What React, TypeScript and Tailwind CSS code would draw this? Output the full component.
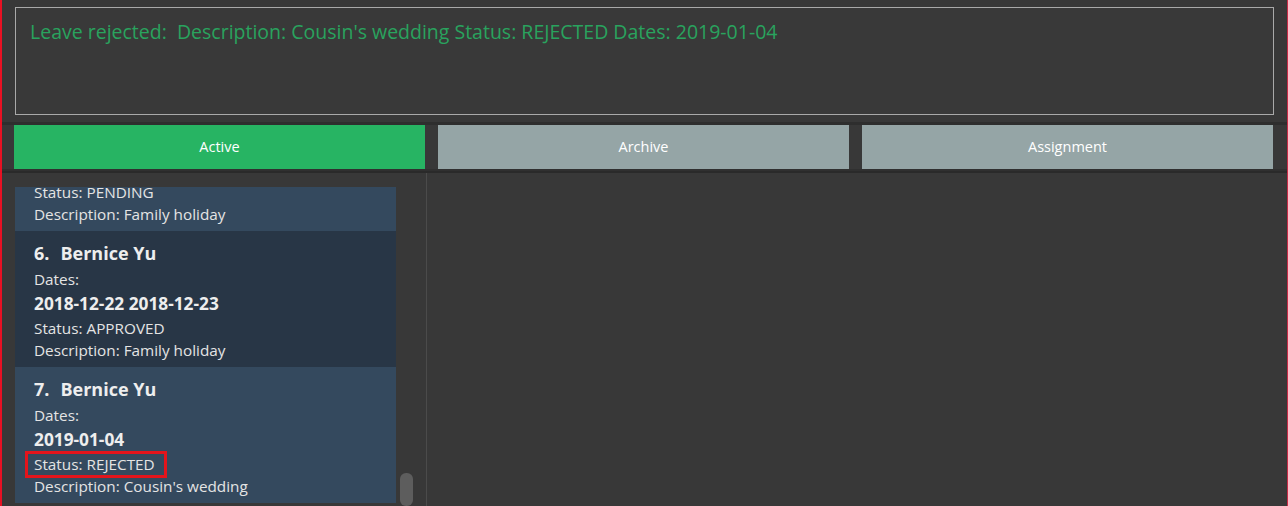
import React from 'react';

type Leave = {
    index: number;
    name: string;
    dates: string;
    status: string;
    description: string;
    highlight?: boolean;
};

const leaves: Leave[] = [
    { index: 5, name: 'Bernice Yu', dates: '2018-12-20 2018-12-21', status: 'PENDING', description: 'Family holiday' },
    { index: 6, name: 'Bernice Yu', dates: '2018-12-22 2018-12-23', status: 'APPROVED', description: 'Family holiday' },
    { index: 7, name: 'Bernice Yu', dates: '2019-01-04', status: 'REJECTED', description: "Cousin's wedding", highlight: true },
];

const font = { fontFamily: '"Open Sans", "Noto Sans", sans-serif' };

const LeaveCard = ({ index, name, dates, status, description, highlight }: Leave) => {
    return (
        <div
            className={`relative h-[136px] w-[381px] shrink-0 pl-[19px] pt-[9px] text-[#e4e4e4] ${
                index % 2 === 0 ? 'bg-[#283646]' : 'bg-[#34495e]'
            }`}
        >
            <div className="flex h-[26px] items-center text-[18px] font-bold text-[#eeeeee]">
                <span>{index}.</span>
                <span className="ml-[11px]">{name}</span>
            </div>
            <div className="flex h-[26px] items-center text-[15.3px]">Dates:</div>
            <div className="flex h-[24px] items-center text-[17.3px] font-bold text-[#eeeeee]">{dates}</div>
            <div className="flex h-[24px] items-center text-[15.3px]">Status: {status}</div>
            <div className="flex h-[20px] items-center text-[15.3px]">Description: {description}</div>
            {highlight && (
                <div className="absolute left-[10px] top-[84px] h-[27px] w-[142px] border-[3px] border-[#e3141c]" />
            )}
        </div>
    );
};

const Tab = ({ label, active }: { label: string; active?: boolean }) => (
    <div
        className={`flex flex-1 items-center justify-center text-[14.5px] text-white ${
            active ? 'bg-[#27b463]' : 'bg-[#95a5a6]'
        }`}
    >
        {label}
    </div>
);

export default function App() {
    return (
        <div
            className="flex h-[506px] w-[1288px] flex-col overflow-hidden border-l-2 border-r border-l-[#e81123] border-r-[#c72c48] bg-[#383838]"
            style={font}
        >
            {/* result box */}
            <div className="px-[13px] pb-[7px] pt-[7px]">
                <div className="h-[108px] border border-[#a9a9a9] bg-[#393939] px-[14px] pt-[9px] text-[19.5px] text-[#29a35e]">
                    Leave rejected:&nbsp; Description: Cousin's wedding Status: REJECTED Dates: 2019-01-04
                </div>
            </div>

            {/* tabs */}
            <div className="h-[3px] bg-[#2e2e2e]" />
            <div className="flex h-[44px] gap-[13px] pl-[12px] pr-[14px]">
                <Tab label="Active" active />
                <Tab label="Archive" />
                <Tab label="Assignment" />
            </div>
            <div className="h-[2px] bg-[#303030]" />
            <div className="h-[2px] bg-[#2a2a2a]" />

            {/* lists */}
            <div className="flex min-h-0 flex-1">
                <div className="flex w-[425px] shrink-0 border-r border-[#4b4b4b]">
                    <div className="ml-[13px] mt-[14px] h-full w-[381px] overflow-hidden">
                        <div className="-mt-[92px] flex flex-col">
                            {leaves.map((leave) => (
                                <LeaveCard key={leave.index} {...leave} />
                            ))}
                        </div>
                    </div>
                    <div className="ml-[4px] flex w-[13px] flex-col pt-[300px]">
                        <div className="h-[60px] rounded-[6px] bg-[#5d5d5d]" />
                    </div>
                </div>
                <div className="flex-1" />
            </div>
        </div>
    );
}
